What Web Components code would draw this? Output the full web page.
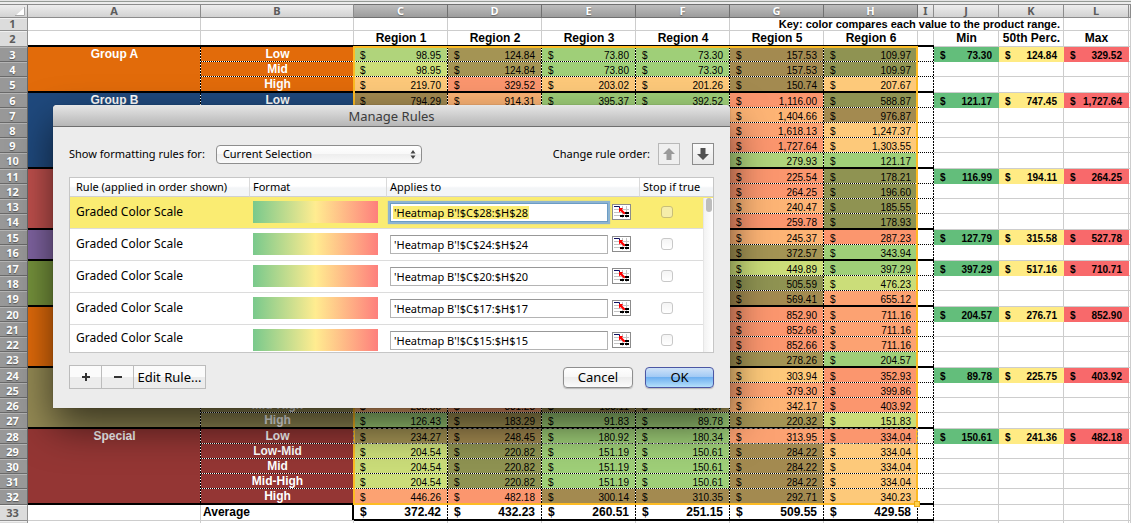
<!DOCTYPE html>
<html lang="en">
<head>
<meta charset="utf-8">
<title>Heatmap B – Manage Rules</title>
<style>
  html, body { margin: 0; height: 100%; overflow: hidden; background: #fff; }
</style>
</head>
<body>
<workbook-view>
  <sheet-grid></sheet-grid>
  <rules-dialog slot="window" heading="Manage Rules"></rules-dialog>
</workbook-view>

<script>
function attach(el, html) {
  const root = el.attachShadow({ mode: 'open' });
  const t = document.createElement('template');
  t.innerHTML = html;
  root.append(t.content.cloneNode(true));
  return root;
}

/* Desktop area: the sheet fills it, windows float over it. */
class WorkbookView extends HTMLElement {
  constructor() {
    super();
    attach(this, `
      <style>
        :host { display: block; position: relative; height: 100vh; overflow: hidden;
                font-family: "Liberation Sans", Arial, sans-serif; color: #000; }
        .edge { height: 4px; box-sizing: border-box;
                background: linear-gradient(#e4e4e4 0 1px, #959a95 1px 2px, #ececec 2px 4px); }
        ::slotted([slot="window"]) { position: absolute; left: 53px; top: 105px; }
      </style>
      <div class="edge"></div>
      <slot></slot>
      <slot name="window"></slot>`);
  }
}

/* Accounting amount: currency sign left, figure right. */
class MoneyValue extends HTMLElement {
  constructor() {
    super();
    attach(this, `
      <style>:host { display: flex; justify-content: space-between; padding: 0 7px 0 6px; }</style>
      <span>$</span><span><slot></slot></span>`);
  }
}

const BANDS = [
  { from: 3, to: 5, color: '#e26b0a', name: 'Group A' },
  { from: 6, to: 10, color: '#1f497d', name: 'Group B' },
  { from: 11, to: 14, color: '#c0504d', name: '' },
  { from: 15, to: 16, color: '#8064a2', name: '' },
  { from: 17, to: 19, color: '#76933c', name: '' },
  { from: 20, to: 23, color: '#e26b0a', name: '' },
  { from: 24, to: 27, color: '#948a54', name: '' },
  { from: 28, to: 32, color: '#943634', name: 'Special' }
];
const LEVELS = { 3: 'Low', 4: 'Mid', 5: 'High', 6: 'Low', 26: 'Mid-High', 27: 'High',
                 28: 'Low', 29: 'Low-Mid', 30: 'Mid', 31: 'Mid-High', 32: 'High' };
const TONE = { g: '#9fcf78', l: '#b0d47b', y: '#cbdd79', o: '#fdc97a', p: '#fdb475', s: '#fca272',
               r: '#fb966e', d: '#8f9352', k: '#a49454', b: '#a38a50' };
/* Columns C to H, "tone amount"; an empty string is a cell with no entry. */
const DATA = {
  3: ['l 98.95', 'k 124.84', 'g 73.80', 'g 73.30', 'b 157.53', 'd 109.97'],
  4: ['y 98.95', 'k 124.84', 'g 73.80', 'g 73.30', 'b 157.53', 'd 109.97'],
  5: ['o 219.70', 'r 329.52', 'o 203.02', 'o 201.26', 'b 150.74', 'o 207.67'],
  6: ['b 794.29', 'p 914.31', 'g 395.37', 'g 392.52', 'r 1,116.00', 'd 588.87'],
  7: ['', '', '', '', 'p 1,404.66', 'b 976.87'],
  8: ['', '', '', '', 's 1,618.13', 'o 1,247.37'],
  9: ['', '', '', '', 'r 1,727.64', 'o 1,303.55'],
  10: ['', '', '', '', 'l 279.93', 'g 121.17'],
  11: ['', '', '', '', 'r 225.54', 'd 178.21'],
  12: ['', '', '', '', 'r 264.25', 'd 196.60'],
  13: ['', '', '', '', 'p 240.47', 'd 185.55'],
  14: ['', '', '', '', 'r 259.78', 'd 178.93'],
  15: ['', '', '', '', 'p 245.37', 'r 287.23'],
  16: ['', '', '', '', 'k 372.57', 'g 343.94'],
  17: ['', '', '', '', 'y 449.89', 'g 397.29'],
  18: ['', '', '', '', 'd 505.59', 'y 476.23'],
  19: ['', '', '', '', 'b 569.41', 's 655.12'],
  20: ['', '', '', '', 'r 852.90', 's 711.16'],
  21: ['', '', '', '', 'r 852.66', 's 711.16'],
  22: ['', '', '', '', 'r 852.66', 's 711.16'],
  23: ['', '', '', '', 'k 278.26', 'g 204.57'],
  24: ['', '', '', '', 'o 303.94', 'r 352.93'],
  25: ['', '', '', '', 's 379.30', 'r 399.86'],
  26: ['p 233.58', 's 331.23', 'k 183.11', 'k 180.87', 'p 342.17', 'r 403.92'],
  27: ['g 126.43', 'k 183.29', 'g 91.83', 'g 89.78', 'k 220.32', 'y 151.83'],
  28: ['k 234.27', 'b 248.45', 'g 180.92', 'g 180.34', 's 313.95', 'r 334.04'],
  29: ['y 204.54', 'd 220.82', 'g 151.19', 'g 150.61', 'b 284.22', 'o 334.04'],
  30: ['y 204.54', 'd 220.82', 'g 151.19', 'g 150.61', 'b 284.22', 'o 334.04'],
  31: ['y 204.54', 'd 220.82', 'g 151.19', 'g 150.61', 'b 284.22', 'o 334.04'],
  32: ['s 446.26', 'r 482.18', 'b 300.14', 'b 310.35', 'b 292.71', 'o 340.23']
};
const KEYS = {
  3: ['73.30', '124.84', '329.52'], 6: ['121.17', '747.45', '1,727.64'],
  11: ['116.99', '194.11', '264.25'], 15: ['127.79', '315.58', '527.78'],
  17: ['397.29', '517.16', '710.71'], 20: ['204.57', '276.71', '852.90'],
  24: ['89.78', '225.75', '403.92'], 28: ['150.61', '241.36', '482.18']
};
const TOTALS = ['372.42', '432.23', '260.51', '251.15', '509.55', '429.58'];

class SheetGrid extends HTMLElement {
  constructor() {
    super();
    const letters = [...'ABCDEFGHIJKL'];
    const widths = [28, 173, 153, 94, 94, 94, 94, 94, 94, 16, 65, 65, 65];
    const money = v => `<money-value>${v}</money-value>`;
    const plain = n => '<td></td>'.repeat(n);
    let rows = `
      <tr class="r1"><th scope="row">1</th>${plain(6)}
        <td class="key" colspan="5">Key: color compares each value to the product range.</td>${plain(2)}</tr>
      <tr class="r2 last"><th scope="row">2</th><td class="thick"></td><td class="thick"></td>
        ${[1, 2, 3, 4, 5, 6].map(n => `<td class="head thick">Region ${n}</td>`).join('')}
        <td class="thick"></td><td class="head">Min</td><td class="head">50th Perc.</td><td class="head">Max</td><td></td></tr>`;
    for (const band of BANDS) {
      for (let r = band.from; r <= band.to; r++) {
        const end = r === band.to;
        const line = end ? 'thick' : 'dots';
        rows += `<tr class="${end ? 'last' : ''}"><th scope="row" class="sel">${r}</th>`;
        if (r === band.from)
          rows += `<td class="name side thick" rowspan="${band.to - band.from + 1}" style="--fill:${band.color}">${band.name}</td>`;
        rows += `<td class="name ${line}" style="--fill:${band.color}">${LEVELS[r] || ''}</td>`;
        rows += DATA[r].map(c => {
          if (!c) return `<td class="side ${line}"></td>`;
          const [tone, v] = c.split(' ');
          return `<td class="num side ${line}" style="--fill:${TONE[tone]}">${money(v)}</td>`;
        }).join('');
        rows += `<td class="side ${line}"></td>`;
        rows += KEYS[r]
          ? KEYS[r].map((v, i) => `<td class="num stat" style="--fill:${['#63be7b', '#ffeb84', '#f8696b'][i]}">${money(v)}</td>`).join('')
          : plain(3);
        rows += '<td></td></tr>';
      }
    }
    rows += `<tr class="last"><th scope="row">33</th><td></td><td class="avg">Average</td>
      ${TOTALS.map(v => `<td class="total side thick">${money(v)}</td>`).join('')}
      <td class="side thick"></td>${plain(4)}</tr>
      <tr><th scope="row">34</th>${plain(13)}</tr>`;

    attach(this, `
      <style>
        :host { display: block; position: relative; }
        table { width: 100%; table-layout: fixed; border-collapse: separate; border-spacing: 0;
                font-size: 12px; line-height: 14px; }
        td, th { box-sizing: border-box; height: 15px; padding: 0; vertical-align: top; white-space: nowrap; }
        thead th { height: 14px; font: bold 11px/12px "Noto Sans", sans-serif; color: #5c5c5c;
                   border: solid #8c8c8c; border-width: 1px 1px 1px 0;
                   background: linear-gradient(#ededed, #d2d2d2); }
        thead th.sel { color: #fff; background: linear-gradient(#bdbdbd, #9c9c9c); border-color: #707070;
                       text-shadow: 0 1px 1px #666; }
        thead svg { display: block; margin: 2px 2px 0 auto; }
        tbody th { font: bold 11px/12px "Noto Sans", sans-serif; color: #5c5c5c; text-align: center;
                   padding: 2px 2px 0 0; background: #dcdcdc;
                   border: solid #909090; border-width: 0 1px 1px 0; box-shadow: inset 0 1px #f0f0f0; }
        tbody th.sel { color: #fff; background: #989898; border-color: #696969; box-shadow: inset 0 1px #b4b4b4;
                       text-shadow: 0 1px 1px #555; }
        .last > th, .last > td { height: 16px; }
        .r1 > th, .r1 > td { height: 13px; line-height: 12px; padding-top: 0; }

        /* Each cell paints its fill and its own right and bottom rules. */
        td { --right: linear-gradient(#cdcdcd 0 0); --bottom: linear-gradient(#cdcdcd 0 0); --bh: 1px;
             background: var(--bottom) bottom / 100% var(--bh) no-repeat,
                         var(--right) right / 1px 100% no-repeat, var(--fill, #fff); }
        td.dots { --bottom: repeating-linear-gradient(90deg, #000 0 1px, #fff 1px 2px); }
        td.thick { --bottom: linear-gradient(#000 0 0); --bh: 2px; }
        td.side { --right: repeating-linear-gradient(#000 0 2px, #fff 2px 3px); }
        td.name { color: #fff; font-weight: bold; text-align: center; }
        td.name:not(.side) { --right: linear-gradient(transparent 0 0); }
        td.num { font-size: 10px; line-height: 13px; padding-top: 2px; }
        td.stat { font-weight: bold; --right: linear-gradient(transparent 0 0); --bottom: linear-gradient(transparent 0 0); }
        td.head { font-weight: bold; text-align: center; }
        td.key { font-size: 11px; font-weight: bold; text-align: right; padding-right: 4px; }
        td.avg { font-weight: bold; padding-left: 2px; --right: linear-gradient(#000 0 0);
                 background-size: 100% 1px, 2px 100%; }
        td.total { font-weight: bold; }

        /* Selection frame and copy marquee lie over the cells. */
        .frame { position: absolute; left: 353px; top: 42px; width: 565px; height: 459px;
                 box-sizing: border-box; border: 2px solid #fdbb23; }
        .frame::after { content: ""; position: absolute; right: -4px; bottom: -4px; width: 4px; height: 4px;
                        background: #ffd24a; border: 1px solid #e8a818; }
        .ants { position: absolute; left: 353px; top: 424px; width: 565px; height: 16px;
                box-sizing: border-box; border: 1px dashed #8a8a8a; }
      </style>
      <table>
        <colgroup>${widths.map(w => `<col style="width:${w}px">`).join('')}<col></colgroup>
        <thead><tr><th><svg width="10" height="9" viewBox="0 0 10 9" aria-hidden="true"><path d="M10 0v9H0z" fill="#fff"/><path d="M0 8.5h9.500V0" fill="none" stroke="#a8a8a8"/></svg></th>
          ${letters.map(l => `<th scope="col" class="${'CDEFGH'.includes(l) ? 'sel' : ''}">${l}</th>`).join('')}<th></th></tr></thead>
        <tbody>${rows}</tbody>
      </table>
      <div class="frame"></div><div class="ants"></div>`);
  }
}

/* Push button: kinds are plain, primary, square and segment. */
class PushButton extends HTMLElement {
  constructor() {
    super();
    const label = this.getAttribute('label');
    attach(this, `
      <style>
        :host { display: block; }
        button { display: flex; align-items: center; justify-content: center; width: 100%; height: 100%;
                 box-sizing: border-box; margin: 0; padding: 0; color: #000; white-space: nowrap;
                 font: 13px/16px "Noto Sans", sans-serif; border: 1px solid #8e8e8e; border-radius: 4px;
                 background: linear-gradient(#fff, #f6f6f6 50%, #ececec 50%, #fbfbfb); box-shadow: 0 1px 1px #bbb; }
        :host([kind="primary"]) button { border-color: #4c57a4;
                 background: linear-gradient(#cfe2f8, #9ec8f4 50%, #6fb0f0 50%, #b5e0fb); }
        :host([kind="square"]) button { border-radius: 0; border-color: #8c8c8c; box-shadow: none;
                 background: linear-gradient(#fbfbfb, #e8e8e8); }
        :host([kind="square"]) button:disabled { border-color: #b8b8b8; background: #efefef; }
        :host([kind="segment"]) button { border-radius: 0; border-color: #bcbcbc; box-shadow: none;
                 background: linear-gradient(#fbfbfb 50%, #ececec 50%); }
      </style>
      <button type="button" ${label ? `aria-label="${label}"` : ''} ${this.hasAttribute('disabled') ? 'disabled' : ''}><slot></slot></button>`);
  }
}

class RuleTable extends HTMLElement {
  constructor() {
    super();
    const ranges = ['28', '24', '20', '17', '15'];
    const picker = `<svg width="17" height="14" viewBox="0 0 17 14" aria-hidden="true">
      <path fill="#fff" d="M0 0h17v14H0z"/>
      <path d="M1 4.500h15M1 7.500h15M1 10.500h15M9.500 1v12M13.500 1v12" stroke="#c4c4c4"/>
      <path fill="#fff" d="M0 2h6v2H0z"/><path d="M1 1.500h5.500V3" fill="none" stroke="#101060"/>
      <path fill="#000" d="M7 10h4v2H7zM12 7h4v2h-4zM12 10h4v2h-4z"/>
      <path fill="#f00" d="M6 3h4L9 4.500 12.500 8 11 9.500 7.500 6 6 7.500z"/></svg>`;
    attach(this, `
      <style>
        :host { display: block; position: relative; height: 176px; box-sizing: border-box; overflow: hidden;
                border: 1px solid #c6c6c6; background: #fff; }
        table { width: 100%; table-layout: fixed; border-collapse: separate; border-spacing: 0; }
        th { box-sizing: border-box; height: 19px; padding: 0 0 0 3px; text-align: left; font-size: 11px; line-height: 18px;
             font-weight: normal; white-space: nowrap; border-bottom: 1px solid #d0d0d0; border-right: 1px solid #dadada;
             background: linear-gradient(#fff 45%, #f3f5f7 55%); }
        th:first-child, td:first-child { padding-left: 6px; }
        th:last-child { border-right: 0; }
        td { box-sizing: border-box; height: 32px; padding: 0 3px; border-bottom: 1px solid #dcdcdc; vertical-align: top;
             font-size: 12px; line-height: 30px; white-space: nowrap; }
        tr:last-child td { height: 27px; line-height: 25px; border: 0; }
        tr.on td { background: #faec72; }
        .scale { height: 22px; width: 125px; margin-top: 4px;
                 background: linear-gradient(90deg, #79c98c, #ffec90 50%, #fe7f7c); }
        .target { display: flex; gap: 4px; padding-top: 6px; line-height: 16px; }
        input[type=text] { box-sizing: border-box; width: 218px; height: 19px; margin: 0; padding: 0 0 0 3px;
             border: 1px solid #b4b4b4; border-top-color: #989898; border-radius: 0; outline: 0; background: #fff;
             color: #000; font: 11px/16px "Noto Sans", sans-serif; }
        .on input[type=text] { border-color: #6c9cc4; box-shadow: 0 0 1px 2px #8db4d2;
             background: linear-gradient(#faec72 0 0) 2px 2px / 136px 13px no-repeat #fff; }
        .pick { width: 19px; height: 16px; margin: 1px 0 0; padding: 0; border: 1px solid #8c8c8c; background: #fff; }
        .pick svg { display: block; }
        input[type=checkbox] { appearance: none; display: block; width: 12px; height: 12px; margin: 9px 0 0 18px;
             border: 1px solid #c8c8c8; border-radius: 3px; background: linear-gradient(#f4f4f4, #fff); }
        .on input[type=checkbox] { border-color: #c8be78; background: #f5edaa; }
        .bar { position: absolute; top: 20px; right: 0; bottom: 0; width: 10px; box-sizing: border-box;
               border-left: 1px solid #e6e6e6; background: linear-gradient(90deg, #f2f2f2, #fff); }
        .bar::before { content: ""; display: block; width: 6px; height: 14px; margin: 0 auto; border-radius: 3px; background: #bdbdbd; }
      </style>
      <table>
        <colgroup><col style="width:180px"><col style="width:137px"><col style="width:253px"><col></colgroup>
        <thead><tr><th scope="col">Rule (applied in order shown)</th><th scope="col">Format</th>
          <th scope="col">Applies to</th><th scope="col">Stop if true</th></tr></thead>
        <tbody>${ranges.map((r, i) => `
          <tr class="${i ? '' : 'on'}"><td>Graded Color Scale</td><td><div class="scale"></div></td>
            <td><div class="target"><input type="text" aria-label="Applies to, rule ${i + 1}" value="'Heatmap B'!$C$${r}:$H$${r}">
              <button class="pick" type="button" aria-label="Pick range">${picker}</button></div></td>
            <td><input type="checkbox" aria-label="Stop if true, rule ${i + 1}"></td></tr>`).join('')}
        </tbody>
      </table>
      <div class="bar"></div>`);
  }
}

class RulesDialog extends HTMLElement {
  constructor() {
    super();
    const arrow = (d, c) => `<svg width="14" height="14" viewBox="0 0 14 14" aria-hidden="true"><path d="${d}" fill="${c}"/></svg>`;
    attach(this, `
      <style>
        :host { display: block; width: 677px; background: #ececec; border-radius: 4px 4px 0 0;
                font: 11px/16px "Noto Sans", sans-serif;
                box-shadow: 0 0 1px rgba(0,0,0,.5), 0 18px 40px rgba(0,0,0,.62); }
        header { height: 22px; box-sizing: border-box; border-bottom: 1px solid #6e6e6e; border-radius: 4px 4px 0 0;
                 background: linear-gradient(#e6e6e6, #b6b6b6); }
        h1 { margin: 0; font-size: 13px; line-height: 22px; font-weight: normal; text-align: center; color: #3c3c3c; }
        .body { display: flex; flex-direction: column; gap: 12px; padding: 16px 16px 19px; }
        .row { display: flex; align-items: center; }
        .pop { position: relative; margin-left: 11px; width: 206px; }
        select { appearance: none; display: block; width: 100%; height: 19px; box-sizing: border-box; margin: 0; padding: 0 20px 0 6px;
                 font: 11px/16px "Noto Sans", sans-serif; color: #000; border: 1px solid #8e8e8e; border-radius: 4px;
                 background: linear-gradient(#fff, #f8f8f8 50%, #eee 50%, #fafafa); }
        .pop svg { position: absolute; right: 6px; top: 5px; pointer-events: none; }
        .order { margin-left: auto; }
        .order + push-button { margin: 0 12px 0 8px; }
        push-button[kind="square"] { width: 22px; height: 22px; }
        push-button[kind="segment"] { height: 24px; width: 33px; margin-right: -1px; }
        push-button.edit { width: 73px; margin-right: auto; }
        .cancel { width: 70px; height: 21px; margin-right: 12px; }
        .ok { width: 69px; height: 21px; }
      </style>
      <header><h1></h1></header>
      <div class="body">
        <div class="row">
          <label for="scope">Show formatting rules for:</label>
          <div class="pop"><select id="scope"><option>Current Selection</option></select>
            <svg width="6" height="9" viewBox="0 0 6 9" aria-hidden="true"><path d="M3 0l2.500 3.500h-5zM3 9l2.500-3.500h-5z" fill="#444"/></svg></div>
          <span class="order">Change rule order:</span>
          <push-button kind="square" label="Move up" disabled>${arrow('M7 1l6 6H9.500v6h-5V7H1z', '#9a9a9a')}</push-button>
          <push-button kind="square" label="Move down">${arrow('M7 13l6-6H9.500V1h-5v6H1z', '#505050')}</push-button>
        </div>
        <rule-table></rule-table>
        <div class="row">
          <push-button kind="segment" label="Add rule"><svg width="10" height="10" aria-hidden="true"><path d="M1 5h8M5 1v8" stroke="#333" stroke-width="2"/></svg></push-button>
          <push-button kind="segment" label="Remove rule"><svg width="10" height="10" aria-hidden="true"><path d="M1 5h8" stroke="#333" stroke-width="2"/></svg></push-button>
          <push-button kind="segment" class="edit">Edit Rule...</push-button>
          <push-button class="cancel">Cancel</push-button>
          <push-button kind="primary" class="ok">OK</push-button>
        </div>
      </div>`).querySelector('h1').textContent = this.getAttribute('heading');
  }
  connectedCallback() { this.setAttribute('role', 'dialog'); }
}

customElements.define('money-value', MoneyValue);
customElements.define('push-button', PushButton);
customElements.define('rule-table', RuleTable);
customElements.define('sheet-grid', SheetGrid);
customElements.define('rules-dialog', RulesDialog);
customElements.define('workbook-view', WorkbookView);
</script>
</body>
</html>
